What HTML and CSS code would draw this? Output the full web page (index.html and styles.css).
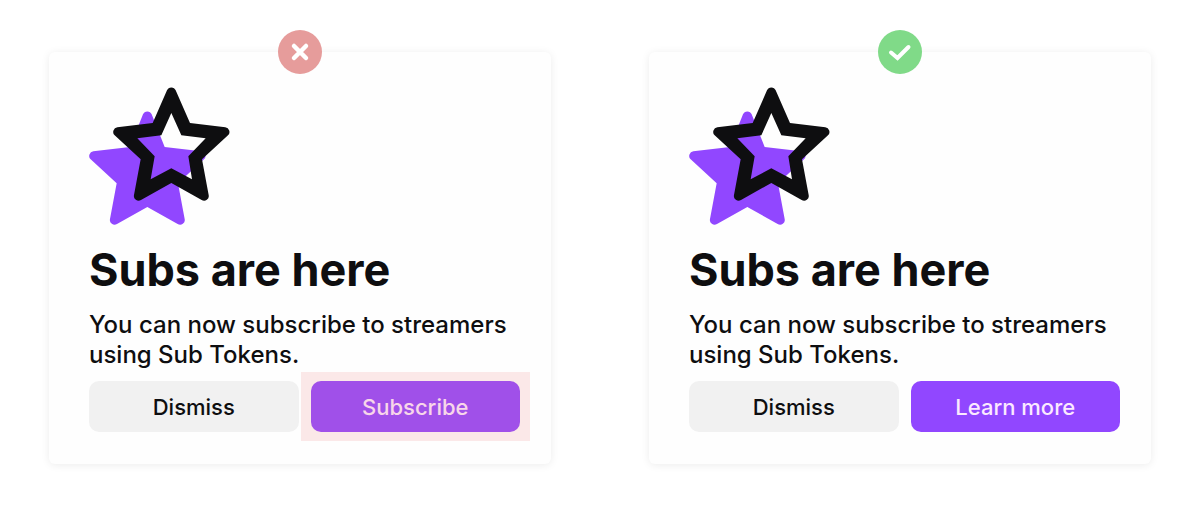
FILE: index.html
```html
<!DOCTYPE html>
<html lang="en">
<head>
    <meta charset="UTF-8">
    <meta name="viewport" content="width=device-width, initial-scale=1.0">
    <title>Subs are here</title>
    <link rel="stylesheet" href="styles.css">
</head>
<body>
    <main class="examples">
        <section class="card">
            <svg class="badge" viewBox="0 0 44 44" role="img" aria-label="Don't">
                <circle cx="22" cy="22" r="22" fill="#e69c9b"/>
                <path d="M16 16L28 28M28 16L16 28" stroke="#fff" stroke-width="4.500" stroke-linecap="round"/>
            </svg>
            <svg class="stars" viewBox="27 20 423 417" aria-hidden="true">
                <path id="star" transform="translate(-72 72)" fill="#9147ff" d="M261 30A14 14 0 0 1 287 30L326 128L436 141A14 14 0 0 1 444 165L366 237L386 344A14 14 0 0 1 365 359L274 308L183 359A14 14 0 0 1 162 344L182 237L104 165A14 14 0 0 1 112 141L222 128Z"/>
                <path id="outline" fill="#0e0e10" fill-rule="evenodd" d="M261 30A14 14 0 0 1 287 30L330 128L436 141A14 14 0 0 1 444 165L366 237L386 344A14 14 0 0 1 365 359L274 308L183 359A14 14 0 0 1 162 344L182 237L104 165A14 14 0 0 1 112 141L218 128ZM274 98L304 165L377 174L325 228L336 297L274 264L212 297L224 228L172 174L244 165Z"/>
            </svg>
            <h1>Subs are here</h1>
            <p>You can now subscribe to streamers using Sub Tokens.</p>
            <div class="actions">
                <button class="btn">Dismiss</button>
                <button class="btn primary flagged">Subscribe</button>
            </div>
        </section>

        <section class="card">
            <svg class="badge" viewBox="0 0 44 44" role="img" aria-label="Do">
                <circle cx="22" cy="22" r="22" fill="#80da88"/>
                <path d="M13 22.500L19.500 28L30.500 17" fill="none" stroke="#fff" stroke-width="4" stroke-linecap="round"/>
            </svg>
            <svg class="stars" viewBox="27 20 423 417" aria-hidden="true">
                <use href="#star"/>
                <use href="#outline"/>
            </svg>
            <h1>Subs are here</h1>
            <p>You can now subscribe to streamers using Sub Tokens.</p>
            <div class="actions">
                <button class="btn">Dismiss</button>
                <button class="btn primary">Learn more</button>
            </div>
        </section>
    </main>
</body>
</html>
```
FILE: styles.css
```css
* {
    box-sizing: border-box;
}
body {
    margin: 0;
    background: #fff;
    color: #0e0e10;
    font-family: Inter, "Liberation Sans", sans-serif;
}
.examples {
    display: grid;
    grid-template-columns: 1fr 1fr;
    gap: 98px;
    padding: 52px 49px;
}
.card {
    position: relative;
    padding: 35px 31px 32px 40px;
    background: #fefefe;
    border-radius: 6px;
    box-shadow: 0 1px 8px rgba(0, 0, 0, 0.08);
}
/* Do / don't marker on the top edge */
.badge {
    position: absolute;
    top: -22px;
    left: 50%;
    width: 44px;
    height: 44px;
    transform: translateX(-50%);
}
.stars {
    display: block;
    width: 141px;
    height: 139px;
}
h1 {
    margin: 14px 0 10px;
    font-size: 45px;
    line-height: 60px;
    font-weight: 700;
}
p {
    margin: 0 0 11px;
    font-size: 24px;
    line-height: 30px;
    font-weight: 500;
}
.actions {
    display: flex;
    gap: 12px;
}
.btn {
    flex: 1;
    height: 51px;
    padding: 0;
    border: none;
    border-radius: 10px;
    background: #f1f1f1;
    color: #0e0e10;
    font-family: inherit;
    font-size: 22px;
    font-weight: 500;
    cursor: pointer;
}
.primary {
    background: #9147ff;
    color: #fbe9ff;
}
/* Red tint over the button that should not be used */
.flagged {
    position: relative;
}
.flagged::after {
    content: "";
    position: absolute;
    inset: -9px -10px;
    background: rgba(235, 125, 125, 0.17);
}
```
